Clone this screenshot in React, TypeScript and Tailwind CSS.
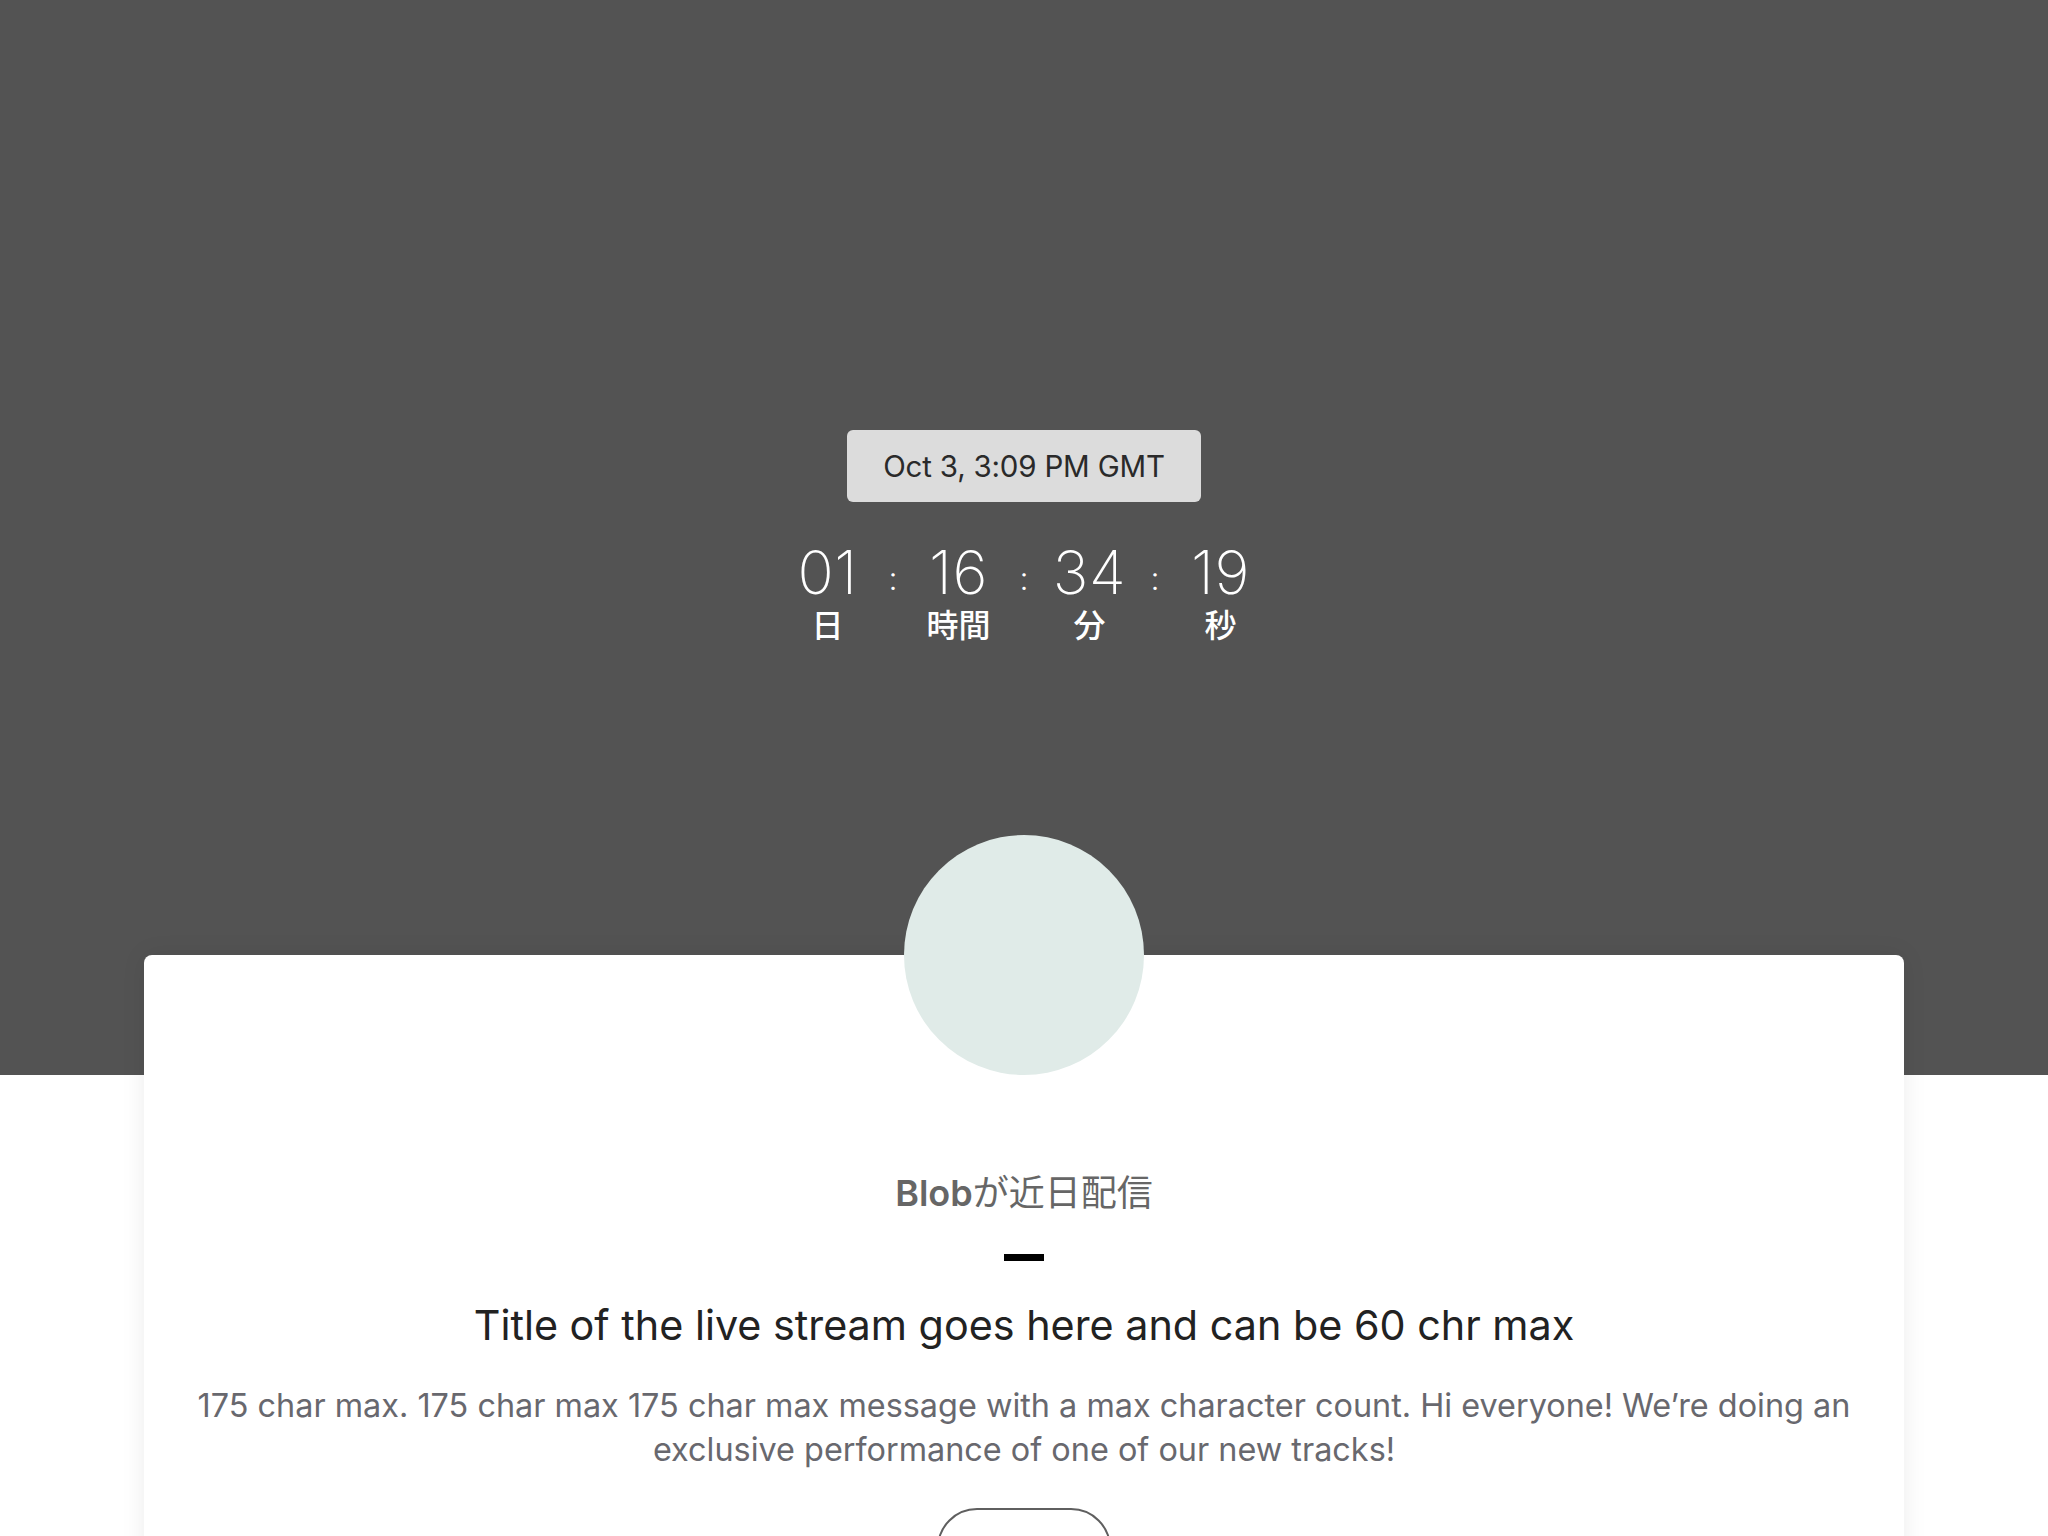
import React from "react";

const units = [
  { v: "01", l: "日" },
  { v: "16", l: "時間" },
  { v: "34", l: "分" },
  { v: "19", l: "秒" },
];

export default function App() {
  const font = { fontFamily: 'Inter, "Noto Sans CJK JP", sans-serif' };
  return (
    <div className="min-h-[1536px] w-full bg-white overflow-hidden" style={font}>
      <div className="h-[1075px] bg-[#535353] flex flex-col items-center pt-[430px]">
        <div className="h-[72px] w-[354px] rounded-[6px] bg-[#dcdcdc] flex items-center justify-center text-[29.5px] text-[#2a2a2a] tracking-[-0.2px]">
          Oct 3, 3:09 PM GMT
        </div>
        <div className="mt-[40px] flex items-start text-white">
          {units.map((u, i) => (
            <React.Fragment key={u.v}>
              {i > 0 && (
                <div className="w-[51px] h-[60px] flex items-end justify-center pb-[7px] text-[32px] leading-none font-light">
                  :
                </div>
              )}
              <div className="w-[80px] flex flex-col items-center">
                <div className="text-[60px] leading-none font-extralight tracking-[0.5px]">{u.v}</div>
                <div className="mt-[5px] text-[32px] leading-none font-medium" style={{ fontFamily: '"Noto Sans CJK JP", sans-serif' }}>
                  {u.l}
                </div>
              </div>
            </React.Fragment>
          ))}
        </div>
      </div>
      <div className="mx-[144px] -mt-[120px] relative bg-white rounded-[8px] shadow-[0_0_24px_rgba(0,0,0,0.08)] flex flex-col items-center px-[48px] pb-[200px]">
        <div className="-mt-[120px] h-[240px] w-[240px] rounded-full bg-[#e0ebe8]" />
        <div className="mt-[98px] text-[36px] leading-[40px] text-[#666666]">
          <span className="font-semibold">Blob</span>が近日配信
        </div>
        <div className="mt-[41px] h-[7px] w-[40px] bg-black" />
        <div className="mt-[39px] text-[41.3px] leading-[50px] text-[#222222]">
          Title of the live stream goes here and can be 60 chr max
        </div>
        <div className="mt-[34px] text-[32.4px] leading-[44px] text-[#68686e] text-center">
          175 char max. 175 char max 175 char max message with a max character count. Hi everyone! We’re doing an exclusive performance of one of our new tracks!
        </div>
        <div className="mt-[36px] h-[80px] w-[174px] rounded-[40px] border-2 border-[#5f5f5f]" />
      </div>
    </div>
  );
}
